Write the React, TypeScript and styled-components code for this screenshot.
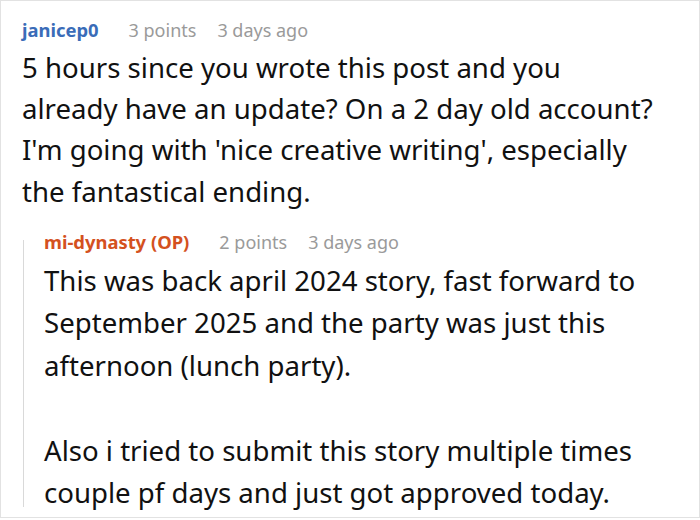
import React from "react";
import styled, { createGlobalStyle } from "styled-components";

const Global = createGlobalStyle`
  html, body { margin: 0; padding: 0; background: #ffffff; }
  body { font-family: "Noto Sans", "Open Sans", sans-serif; }
`;

const Card = styled.div`
  box-sizing: border-box;
  width: 700px;
  height: 518px;
  border: 1px solid #e2e2e2;
  padding: 17px 20px 0 21px;
  overflow: hidden;
  background: #fff;
`;

const Header = styled.div`
  display: flex;
  align-items: baseline;
  gap: 21px;
  font-size: 18px;
  line-height: 24px;
  margin-bottom: 4.5px;
`;

const Author = styled.span<{ $tone: "blue" | "orange" }>`
  font-weight: 700;
  font-size: 18.4px;
  margin-right: 9px;
  color: ${(p) => (p.$tone === "blue" ? "#3a6cb8" : "#d4511e")};
`;

const Meta = styled.span`
  color: #9a9a9a;
`;

const Body = styled.p<{ $lh: number }>`
  margin: 0;
  font-size: 27.6px;
  line-height: ${(p) => p.$lh}px;
  color: #111;
  white-space: pre-line;
`;

const Reply = styled.div`
  position: relative;
  margin-top: 18px;
  padding-left: 22px;

  &::before {
    content: "";
    position: absolute;
    left: 1px;
    top: 10px;
    bottom: 7px;
    width: 1px;
    background: #d9d9d9;
  }
`;

const Comment = styled.div``;

export default function App() {
  return (
    <>
      <Global />
      <Card>
        <Comment>
          <Header>
            <Author $tone="blue">janicep0</Author>
            <Meta>3 points</Meta>
            <Meta>3 days ago</Meta>
          </Header>
          <Body $lh={41.4}>
            5 hours since you wrote this post and you{"\n"}already have an update? On a 2 day old account?{"\n"}I'm going with 'nice creative writing', especially{"\n"}the fantastical ending.
          </Body>
        </Comment>
        <Reply>
          <Header>
            <Author $tone="orange">mi-dynasty (OP)</Author>
            <Meta>2 points</Meta>
            <Meta>3 days ago</Meta>
          </Header>
          <Body $lh={42.5}>
            This was back april 2024 story, fast forward to{"\n"}September 2025 and the party was just this{"\n"}afternoon (lunch party).{"\n"}{"\n"}Also i tried to submit this story multiple times{"\n"}couple pf days and just got approved today.
          </Body>
        </Reply>
      </Card>
    </>
  );
}
